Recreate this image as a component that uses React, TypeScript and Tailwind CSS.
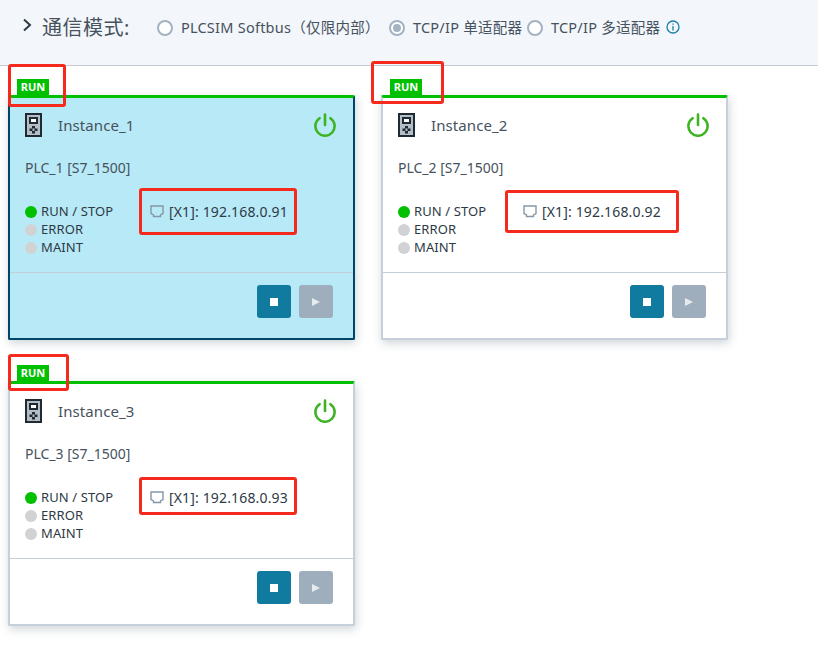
const FONT = "font-['Noto_Sans','Noto_Sans_CJK_SC',sans-serif]"

interface Instance {
  name: string
  plc: string
  ip: string
  selected?: boolean
  runBox: string
  ipBox: string
}

const INSTANCES: Instance[] = [
  {
    name: 'Instance_1',
    plc: 'PLC_1 [S7_1500]',
    ip: '[X1]: 192.168.0.91',
    selected: true,
    runBox: 'left-[-2px] top-[-34px] w-[58px] h-[43px]',
    ipBox: 'left-[129px] top-[90px] w-[158px] h-[47px]',
  },
  {
    name: 'Instance_2',
    plc: 'PLC_2 [S7_1500]',
    ip: '[X1]: 192.168.0.92',
    runBox: 'left-[-12px] top-[-37px] w-[73px] h-[43px]',
    ipBox: 'left-[122px] top-[92px] w-[174px] h-[43px]',
  },
  {
    name: 'Instance_3',
    plc: 'PLC_3 [S7_1500]',
    ip: '[X1]: 192.168.0.93',
    runBox: 'left-[-2px] top-[-30px] w-[61px] h-[37px]',
    ipBox: 'left-[129px] top-[93px] w-[158px] h-[38px]',
  },
]

const MODES = [
  { label: 'PLCSIM Softbus（仅限内部）', width: 'w-[232px]', checked: false },
  { label: 'TCP/IP 单适配器', width: 'w-[138px]', checked: true },
  { label: 'TCP/IP 多适配器', width: 'w-[139px]', checked: false },
]

function Radio({ checked }: { checked?: boolean }) {
  return (
    <span className="w-4 h-4 shrink-0 rounded-full border-2 border-[#a3b3c2] bg-white flex items-center justify-center">
      {checked && <span className="w-2 h-2 rounded-full bg-[#a3b3c2]" />}
    </span>
  )
}

function DeviceIcon() {
  return (
    <svg width="17" height="24" viewBox="0 0 17 24" className="shrink-0">
      <rect width="17" height="24" fill="#1f2a33" />
      <rect x="2" y="2" width="13" height="20" fill="#b4bec6" />
      <rect x="4" y="4" width="9" height="7" fill="#1f2a33" />
      <rect x="6" y="6" width="5" height="3" fill="#ffffff" />
      <rect x="7" y="13" width="3" height="2.5" fill="#1f2a33" />
      <rect x="4.5" y="15.5" width="3" height="2.5" fill="#1f2a33" />
      <rect x="9.5" y="15.5" width="3" height="2.5" fill="#1f2a33" />
      <rect x="7" y="18" width="3" height="2.5" fill="#1f2a33" />
    </svg>
  )
}

function PowerIcon() {
  return (
    <svg width="24" height="24" viewBox="0 0 24 24" fill="none" stroke="#3eb324" strokeWidth="2.6" strokeLinecap="round">
      <path d="M12 1.5v10.5" />
      <path d="M6.6 5.2a9.6 9.6 0 1 0 10.8 0" />
    </svg>
  )
}

function PortIcon() {
  return (
    <svg width="14" height="13" viewBox="0 0 14 13" fill="none" stroke="#8796a5" strokeWidth="1.4" className="shrink-0">
      <path d="M1 1h12v7.5l-2.5 1.5v1.5h-7V10L1 8.5z" />
    </svg>
  )
}

function Led({ on, label }: { on?: boolean; label: string }) {
  return (
    <div className="flex items-center h-[18px]">
      <span className={`w-3 h-3 rounded-full ${on ? 'bg-[#00c000]' : 'bg-[#d0d2d4]'}`} />
      <span className="ml-1 text-[13px] tracking-[0.1px] text-[#2d3a46]">{label}</span>
    </div>
  )
}

function Card({ item }: { item: Instance }) {
  return (
    <div
      className={`relative h-[245px] rounded-[2px] border-t-[3px] border-t-[#00c000] border-x-2 border-b-2 shadow-[1px_3px_10px_rgba(60,80,100,0.25)] ${
        item.selected ? 'bg-[#b8e9f6] border-x-[#004669] border-b-[#004669]' : 'bg-white border-x-[#c5d0da] border-b-[#c5d0da]'
      }`}
    >
      <div className="absolute left-[7px] top-[-19px] w-8 h-4 bg-[#00c000] text-white text-[11px] font-bold leading-4 text-center">
        RUN
      </div>

      <div className="h-[175px] border-b border-[#c5ced6] pl-[15px] pr-4 pt-[15px]">
        <div className="flex items-center justify-between h-6">
          <div className="flex items-center">
            <DeviceIcon />
            <span className="ml-4 text-[15px] tracking-[0.1px] text-[#46525e]">{item.name}</span>
          </div>
          <PowerIcon />
        </div>
        <div className="mt-[21px] h-5 leading-5 text-[14px] text-[#46525e]">{item.plc}</div>
        <div className="mt-[25px] flex">
          <div className="w-[125px]">
            <Led on label="RUN / STOP" />
            <Led label="ERROR" />
            <Led label="MAINT" />
          </div>
          <div className="flex items-center h-4 gap-[5px] text-[14px] tracking-[0.15px] text-[#2d3a46]">
            <PortIcon />
            {item.ip}
          </div>
        </div>
      </div>

      <div className="flex justify-end gap-2 pt-3 pr-5">
        <button className="w-[34px] h-[33px] rounded-[3px] bg-[#117a9f] flex items-center justify-center">
          <span className="w-2 h-2 bg-white" />
        </button>
        <button className="w-[34px] h-[33px] rounded-[3px] bg-[#9eaebd] flex items-center justify-center">
          <span className="w-0 h-0 border-y-4 border-y-transparent border-l-8 border-l-[#e6ebf0]" />
        </button>
      </div>

      {/* annotations */}
      <div className={`absolute rounded-[3px] border-[3px] border-[#f52a1c] ${item.runBox}`} />
      <div className={`absolute rounded-[3px] border-[3px] border-[#f52a1c] ${item.ipBox}`} />
    </div>
  )
}

export default function App() {
  return (
    <div className={`${FONT} w-[818px] h-[645px] bg-white overflow-hidden`}>
      <div className="h-[66px] bg-[#f3f6fa] border-b border-[#c5cbd2] flex items-center pb-[9px] pl-[22px] text-[#46525e]">
        <svg width="10" height="14" viewBox="0 0 10 14" fill="none" stroke="#2d3a46" strokeWidth="2" className="mb-[6px]">
          <path d="M2 1.5 8 7l-6 5.5" />
        </svg>
        <span className="ml-[10px] mr-[27px] text-[20px] tracking-[0.5px] whitespace-nowrap">通信模式:</span>
        {MODES.map(r => (
          <div key={r.label} className={`flex items-center gap-2 text-[14.5px] tracking-[0.25px] whitespace-nowrap ${r.width}`}>
            <Radio checked={r.checked} />
            {r.label}
          </div>
        ))}
        <svg width="14" height="14" viewBox="0 0 14 14" fill="none" stroke="#1b7fa6" strokeWidth="1.3" className="mb-[2px]">
          <circle cx="7" cy="7" r="6" />
          <path d="M7 6v4.5M7 3.4v1.3" />
        </svg>
      </div>

      <div className="grid grid-cols-[347px_347px] gap-x-[26px] gap-y-[41px] pl-2 pt-[29px]">
        {INSTANCES.map(item => (
          <Card key={item.name} item={item} />
        ))}
      </div>
    </div>
  )
}
